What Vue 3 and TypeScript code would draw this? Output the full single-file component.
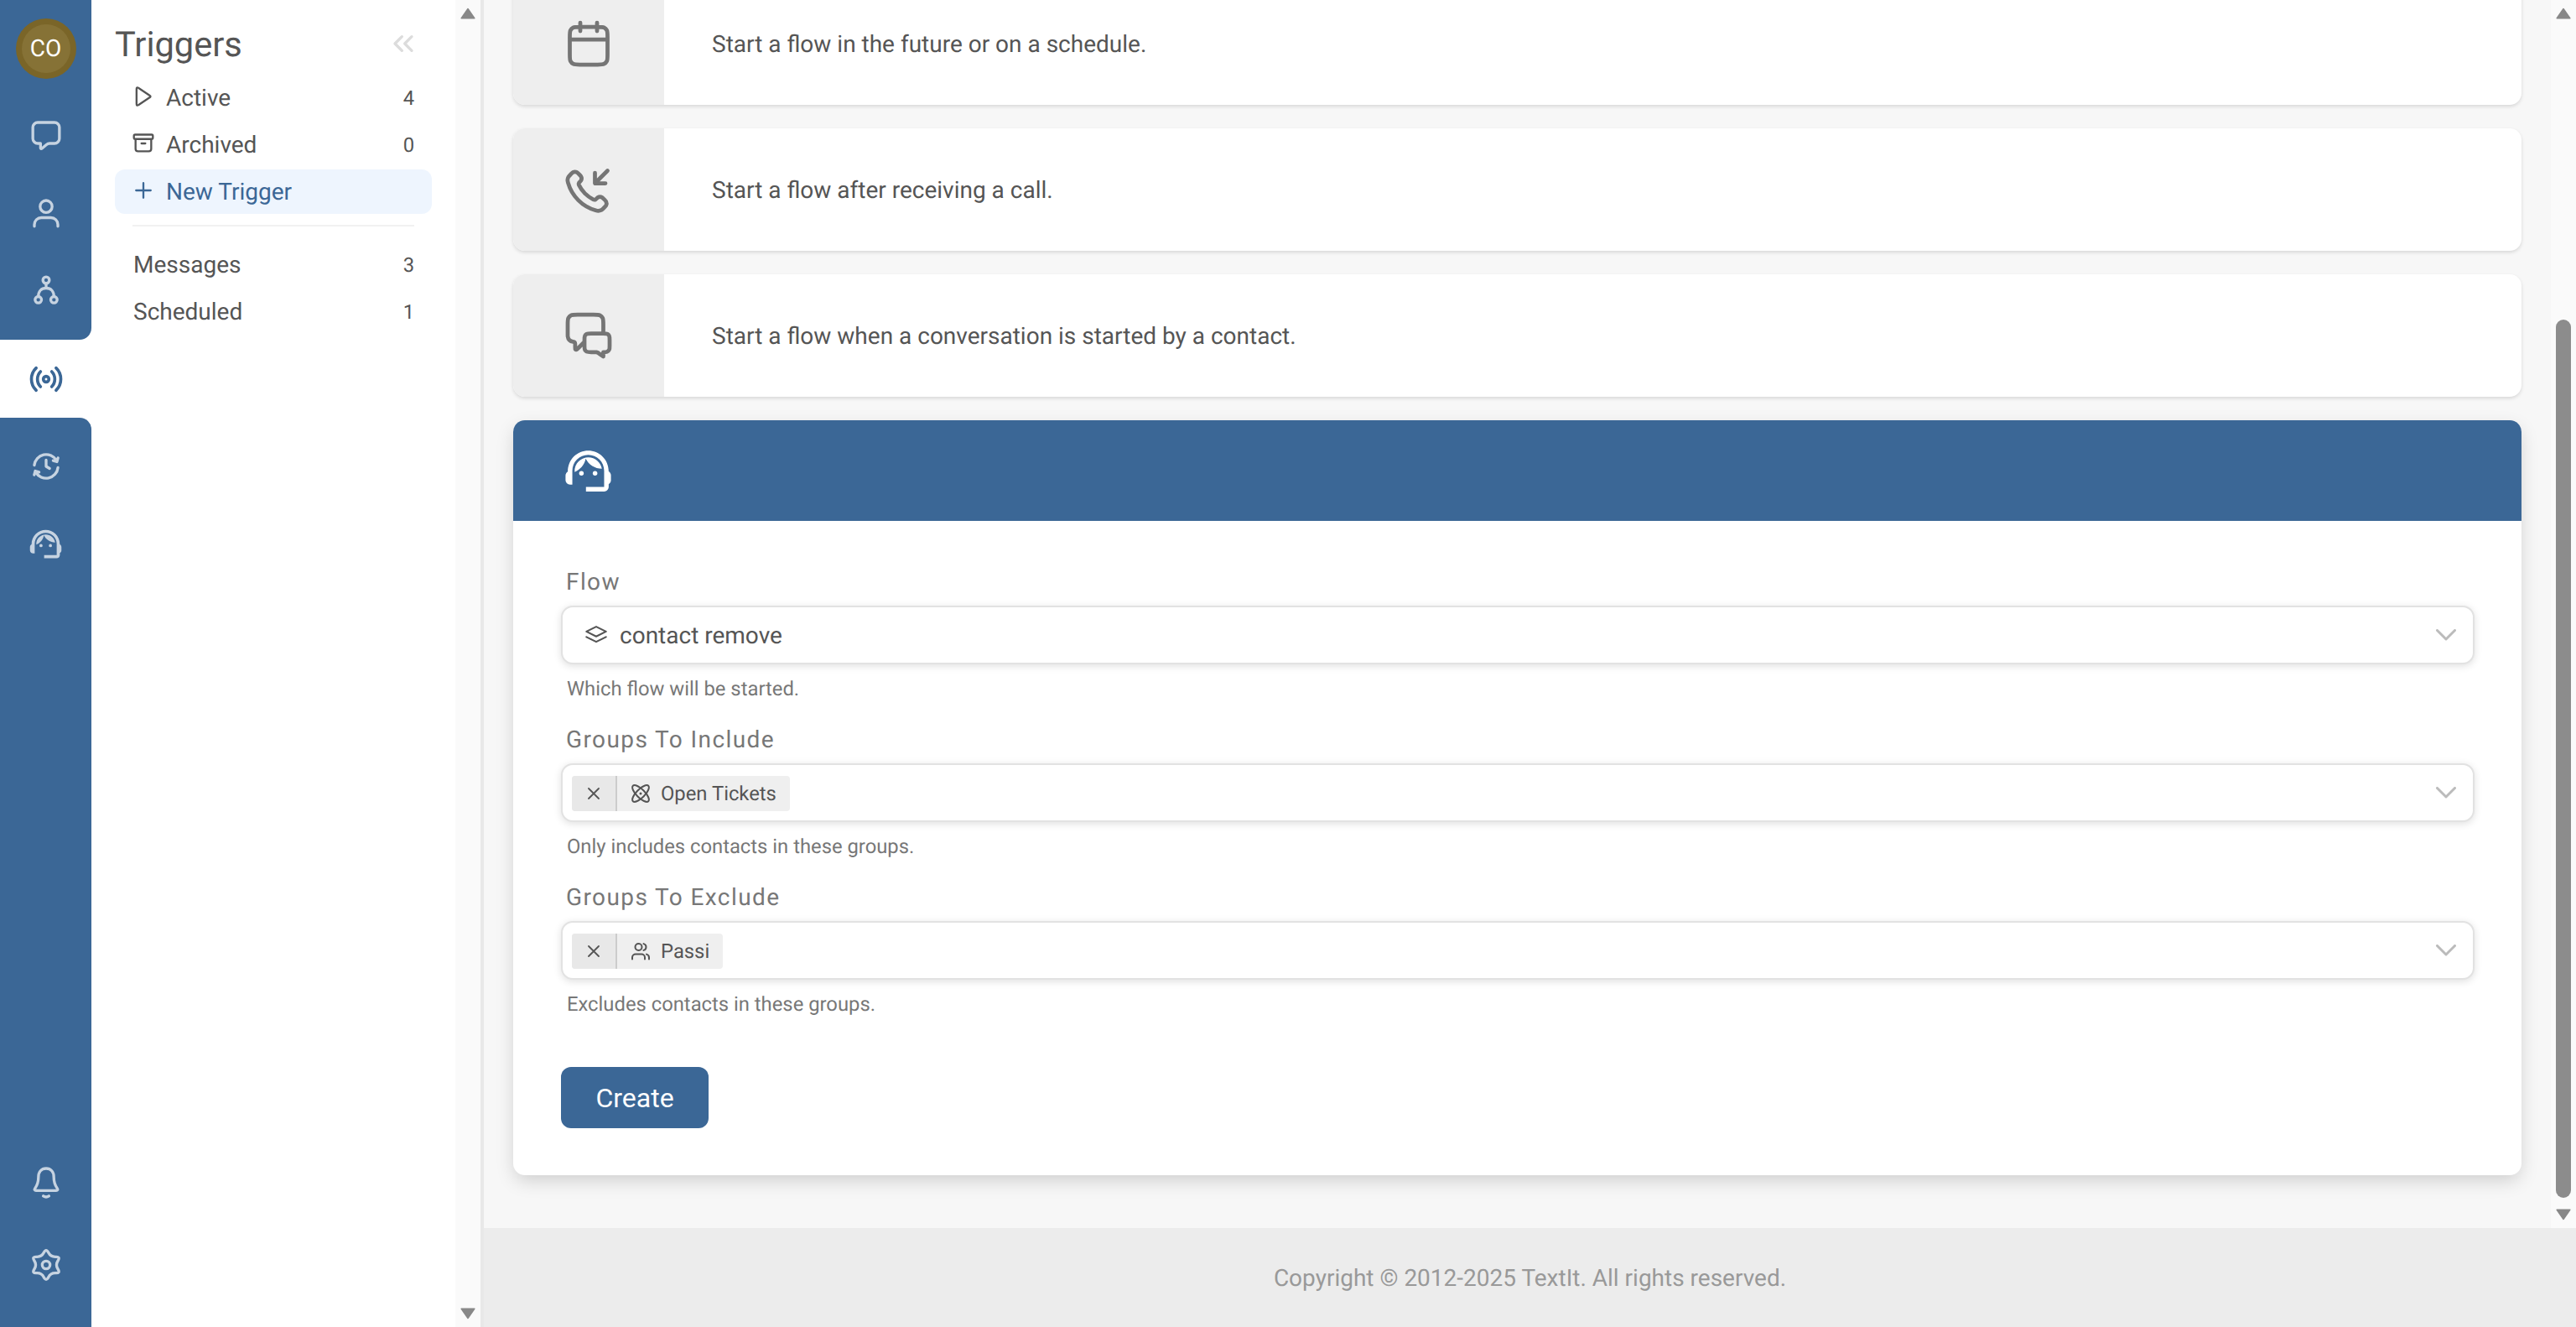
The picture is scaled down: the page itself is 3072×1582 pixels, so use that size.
<script setup lang="ts">
type Row = { label: string; count: number };
type Field = { label: string; help: string; chip: string; kind: string };

const triggerRows: { label: string; count: number; icon: string }[] = [
  { label: "Active", count: 4, icon: "play" },
  { label: "Archived", count: 0, icon: "archive" },
];
const otherRows: Row[] = [
  { label: "Messages", count: 3 },
  { label: "Scheduled", count: 1 },
];
const groupFields: Field[] = [
  { label: "Groups To Include", help: "Only includes contacts in these groups.", chip: "Open Tickets", kind: "atom" },
  { label: "Groups To Exclude", help: "Excludes contacts in these groups.", chip: "Passi", kind: "users" },
];

function gearPath(): string {
  const pts: [number, number][] = [];
  for (let i = 0; i < 12; i++) {
    const a = ((-90 + i * 30) * Math.PI) / 180;
    const r = i % 2 === 0 ? 12 : 6.5;
    pts.push([12 + r * Math.cos(a), 12 + r * Math.sin(a)]);
  }
  const mid = (p: [number, number], q: [number, number]) =>
    `${((p[0] + q[0]) / 2).toFixed(2)} ${((p[1] + q[1]) / 2).toFixed(2)}`;
  let d = `M${mid(pts[11], pts[0])}`;
  for (let i = 0; i < 12; i++) {
    d += `Q${pts[i][0].toFixed(2)} ${pts[i][1].toFixed(2)} ${mid(pts[i], pts[(i + 1) % 12])}`;
  }
  return d + "Z";
}
const gear = gearPath();
const agentPaths = [
  "M21 12.22C21 6.73 16.74 3 12 3c-4.69 0-9 3.65-9 9.28-.6.34-1 .98-1 1.72v2c0 1.1.9 2 2 2h1v-6.1c0-3.87 3.13-7 7-7s7 3.13 7 7V19h-8v2h8c1.1 0 2-.9 2-2v-1.22c.59-.31 1-.92 1-1.61v-2.3c0-.67-.41-1.28-1-1.65z",
  "M18 11.03C17.52 8.18 15.04 6 12.05 6c-3.03 0-6.29 2.51-6.03 6.45 2.47-1.01 4.33-3.21 4.86-5.89 1.31 2.63 4 4.44 7.12 4.47z",
];
</script>

<template>
  <div class="page">
    <nav class="rail">
      <div class="rail-top">
        <div class="avatar"><span class="avatar-in">CO</span></div>
        <button class="rail-btn">
          <svg class="ico40" viewBox="0 0 24 24"><path d="M2.5 6.5A3.5 3.5 0 0 1 6 3h12a3.5 3.5 0 0 1 3.5 3.5v8a3.5 3.5 0 0 1-3.5 3.5h-3.5c-1 0-1.6.3-2.3.9L9 21.6c-.5.4-1 .1-1-.5V18H6a3.5 3.5 0 0 1-3.5-3.5z" /></svg>
        </button>
        <button class="rail-btn">
          <svg class="ico40" viewBox="0 0 24 24"><circle cx="12" cy="7.3" r="4.3" /><path d="M3.6 21.5v-1.2a5 5 0 0 1 5-5h6.8a5 5 0 0 1 5 5v1.2" /></svg>
        </button>
        <button class="rail-btn">
          <svg class="ico40" viewBox="0 0 24 24"><circle cx="12" cy="4.8" r="2.3" /><circle cx="6.4" cy="18.8" r="2.3" /><circle cx="17.6" cy="18.8" r="2.3" /><path d="M12 7.1v3.4M6.4 16.5c0-3.6 2-6 5.6-6s5.6 2.4 5.6 6" /></svg>
        </button>
      </div>
      <button class="rail-active">
        <svg class="ico40 active-ico" viewBox="0 0 24 24"><circle cx="12" cy="12" r="2" /><path d="M4.9 4a11.1 11.1 0 0 0 0 16M19.1 4a11.1 11.1 0 0 1 0 16M8 6.6a7.7 7.7 0 0 0 0 10.8M16 6.6a7.7 7.7 0 0 1 0 10.8" /></svg>
      </button>
      <div class="rail-bottom">
        <button class="rail-btn">
          <svg class="ico40" viewBox="0 0 24 24"><path d="M20.453 12.893A8.5 8.5 0 0 1 4.638 16.25l-.25-.433m-.842-4.71A8.5 8.5 0 0 1 19.361 7.75l.25.433M3.493 18.066l.732-2.732 2.732.732m10.085-8.132 2.732.732.732-2.732M12 7.5V12l2.5 1.5" /></svg>
        </button>
        <button class="rail-btn">
          <svg class="ico45" viewBox="0 0 24 24"><path v-for="d in agentPaths" :key="d" :d="d" /><circle cx="9" cy="13" r="1" /><circle cx="15" cy="13" r="1" /></svg>
        </button>
        <div class="rail-spacer"></div>
        <button class="rail-btn rail-bell">
          <svg class="ico40" viewBox="0 0 24 24"><path d="M12 1.800C8.600 1.800 6.500 4.300 6.500 8c0 3.800-.9 5.900-2.400 8-.7 1-.3 1.600.7 1.600h14.400c1 0 1.400-.6.7-1.600-1.500-2.100-2.400-4.200-2.400-8 0-3.700-2.100-6.200-5.500-6.200zM10 21.500c1.200.8 2.800.8 4 0" /></svg>
        </button>
        <button class="rail-btn">
          <svg class="ico40" viewBox="0 0 24 24"><path :d="gear" /><circle cx="12" cy="12" r="2.800" /></svg>
        </button>
      </div>
    </nav>

    <aside class="sidebar">
      <div class="side-main">
        <div class="side-head">
          <h1 class="side-title">Triggers</h1>
          <svg class="collapse" viewBox="0 0 24 24"><path d="M18 17l-5-5 5-5M11 17l-5-5 5-5" /></svg>
        </div>
        <ul class="menu">
          <li v-for="r in triggerRows" :key="r.label" class="menu-row">
            <svg class="menu-ico" viewBox="0 0 24 24">
              <path v-if="r.icon === 'play'" d="M5 4.989c0-.971 0-1.457.203-1.725a1 1 0 0 1 .737-.396c.335-.02.74.25 1.548.788l10.515 7.01c.668.446 1.002.668 1.118.949a1 1 0 0 1 0 .77c-.116.28-.45.503-1.118.948l-10.515 7.01c-.809.54-1.213.81-1.548.789a1 1 0 0 1-.737-.396C5 20.468 5 19.982 5 19.01V4.99Z" />
              <path v-else d="M4 7.500v10c0 1.700.8 2.500 2.500 2.500h11c1.700 0 2.500-.8 2.500-2.500v-10M3.500 3h17c.8 0 1.200.4 1.200 1.200v2.100c0 .8-.4 1.200-1.200 1.200h-17c-.8 0-1.200-.4-1.200-1.200V4.200C2.300 3.400 2.700 3 3.500 3zM10 12h4" />
            </svg>
            <span class="menu-label">{{ r.label }}</span>
            <span class="menu-count">{{ r.count }}</span>
          </li>
          <li class="menu-row menu-new">
            <svg class="menu-ico" viewBox="0 0 24 24"><path d="M12 4.500v15M4.500 12h15" /></svg>
            <span class="menu-label">New Trigger</span>
          </li>
        </ul>
        <div class="side-rule"></div>
        <ul class="menu menu-plain">
          <li v-for="r in otherRows" :key="r.label" class="menu-row">
            <span class="menu-label">{{ r.label }}</span>
            <span class="menu-count">{{ r.count }}</span>
          </li>
        </ul>
      </div>
      <div class="side-scroll">
        <svg class="arrow" viewBox="0 0 18 14"><path d="M9 1.500 16.800 12.800H1.200z" /></svg>
        <svg class="arrow" viewBox="0 0 18 14"><path d="M9 12.500 16.800 1.200H1.200z" /></svg>
      </div>
    </aside>

    <div class="main">
      <div class="main-top">
        <div class="content">
          <div class="stack">
            <div class="option">
              <div class="option-ico">
                <svg class="ico60" viewBox="0 0 24 24"><path d="M21 10H3m13-8v4M8 2v4m-.2 16h8.400c1.680 0 2.520 0 3.162-.327a3 3 0 0 0 1.311-1.311C21 19.720 21 18.880 21 17.200V8.800c0-1.680 0-2.520-.327-3.162a3 3 0 0 0-1.311-1.311C18.720 4 17.880 4 16.200 4H7.800c-1.680 0-2.520 0-3.162.327a3 3 0 0 0-1.311 1.311C3 6.280 3 7.120 3 8.800v8.400c0 1.680 0 2.520.327 3.162a3 3 0 0 0 1.311 1.311C5.280 22 6.120 22 7.800 22Z" /></svg>
              </div>
              <div class="option-text">Start a flow in the future or on a schedule.</div>
            </div>
            <div class="option">
              <div class="option-ico">
                <svg class="ico60" viewBox="0 0 24 24"><path d="M15 9V4m0 5h5m-5 0 6-6M10.227 13.863a14.604 14.604 0 0 1-2.847-4.010 1.698 1.698 0 0 1-.113-.266 1.050 1.050 0 0 1 .147-.862c.048-.067.105-.124.220-.238.350-.350.524-.525.638-.7a2 2 0 0 0 0-2.180c-.114-.177-.289-.352-.638-.701l-.195-.195c-.532-.531-.797-.797-1.082-.941a2 2 0 0 0-1.805 0c-.285.144-.551.410-1.082.941l-.158.158c-.530.530-.795.794-.997 1.154-.224.400-.386 1.020-.384 1.479 0 .413.080.695.240 1.260a19.038 19.038 0 0 0 4.873 8.283 19.039 19.039 0 0 0 8.284 4.873c.565.160.847.240 1.260.240a3.500 3.500 0 0 0 1.478-.384c.360-.201.625-.467 1.154-.997l.158-.158c.532-.530.797-.797.941-1.082a2 2 0 0 0 0-1.805c-.144-.285-.410-.550-.940-1.082l-.196-.195c-.350-.350-.524-.524-.7-.638a2 2 0 0 0-2.180 0c-.176.114-.350.289-.7.638-.115.115-.172.172-.239.220a1.050 1.050 0 0 1-.862.147 1.694 1.694 0 0 1-.266-.113 14.600 14.600 0 0 1-4.010-2.847Z" /></svg>
              </div>
              <div class="option-text">Start a flow after receiving a call.</div>
            </div>
            <div class="option">
              <div class="option-ico">
                <svg class="ico60" viewBox="0 0 24 24"><path d="M10 15 6.925 18.114c-.429.434-.644.652-.828.667a.5.5 0 0 1-.421-.173c-.12-.14-.12-.446-.12-1.056v-1.560c0-.547-.449-.944-.991-1.023a3 3 0 0 1-2.533-2.533C2 12.219 2 11.960 2 11.443V6.800c0-1.680 0-2.520.327-3.162a3 3 0 0 1 1.311-1.311C4.280 2 5.120 2 6.800 2h7.400c1.680 0 2.520 0 3.162.327a3 3 0 0 1 1.311 1.311C19 4.280 19 5.120 19 6.800V11m0 11-2.176-1.513a3 3 0 0 0-.626-.394 2 2 0 0 0-.462-.145c-.18-.033-.366-.033-.739-.033H13.200c-1.120 0-1.680 0-2.108-.218a2 2 0 0 1-.874-.874C10 18.395 10 17.835 10 16.715V14.200c0-1.120 0-1.680.218-2.108a2 2 0 0 1 .874-.874C11.520 11 12.080 11 13.200 11h5.600c1.120 0 1.680 0 2.108.218a2 2 0 0 1 .874.874C22 12.520 22 13.080 22 14.200v2.715c0 .931 0 1.397-.152 1.765a2 2 0 0 1-1.083 1.082c-.367.153-.833.153-1.765.153V22Z" /></svg>
              </div>
              <div class="option-text">Start a flow when a conversation is started by a contact.</div>
            </div>

            <section class="form-card">
              <header class="form-head">
                <svg class="ico65" viewBox="0 0 24 24"><path v-for="d in agentPaths" :key="d" :d="d" /><circle cx="9" cy="13" r="1" /><circle cx="15" cy="13" r="1" /></svg>
              </header>
              <div class="form-body">
                <div class="field">
                  <label class="field-label">Flow</label>
                  <div class="select">
                    <svg class="layers" viewBox="0 0 24 24"><path d="M2 8.500 12 3.500l10 5-10 5zM2 14l10 5 10-5" /></svg>
                    <span class="select-value">contact remove</span>
                    <svg class="chev" viewBox="0 0 24 14"><path d="M1.500 1.500 12 12 22.500 1.500" /></svg>
                  </div>
                  <div class="field-help">Which flow will be started.</div>
                </div>
                <div v-for="f in groupFields" :key="f.label" class="field">
                  <label class="field-label">{{ f.label }}</label>
                  <div class="select select-chips">
                    <span class="chip">
                      <span class="chip-x">
                        <svg class="chip-x-ico" viewBox="0 0 14 14"><path d="M1 1l12 12M13 1 1 13" /></svg>
                      </span>
                      <svg v-if="f.kind === 'atom'" class="chip-ico" viewBox="0 0 24 24">
                        <ellipse cx="12" cy="12" rx="13" ry="5" transform="rotate(45 12 12)" />
                        <ellipse cx="12" cy="12" rx="13" ry="5" transform="rotate(-45 12 12)" />
                        <circle class="dot" cx="12" cy="12" r="1.500" />
                      </svg>
                      <svg v-else class="chip-ico" viewBox="0 0 24 24">
                        <circle cx="9.500" cy="7" r="4" />
                        <path d="M22 21.500v-2a4 4 0 0 0-3-3.870M15.500 3.130a4 4 0 0 1 0 7.750M17 21.500v-2a4 4 0 0 0-4-4H6a4 4 0 0 0-4 4v2" />
                      </svg>
                      <span class="chip-text">{{ f.chip }}</span>
                    </span>
                    <svg class="chev" viewBox="0 0 24 14"><path d="M1.500 1.500 12 12 22.500 1.500" /></svg>
                  </div>
                  <div class="field-help">{{ f.help }}</div>
                </div>
                <button class="create">Create</button>
              </div>
            </section>
          </div>
        </div>
        <div class="main-scroll">
          <svg class="arrow" viewBox="0 0 18 14"><path d="M9 1.500 16.800 12.800H1.200z" /></svg>
          <div class="thumb"></div>
          <svg class="arrow arrow-down" viewBox="0 0 18 14"><path d="M9 12.500 16.800 1.200H1.200z" /></svg>
        </div>
      </div>
      <footer class="footer">Copyright © 2012-2025 TextIt. All rights reserved.</footer>
    </div>
  </div>
</template>

<style>
html, body { margin: 0; padding: 0; overflow: hidden; background: #fff; }
</style>

<style scoped>
.page {
  display: flex;
  width: 3072px;
  height: 1582px;
  overflow: hidden;
  font-family: Roboto, "Liberation Sans", sans-serif;
  text-rendering: geometricPrecision;
  color: #555;
  background: #fff;
}
button { border: 0; padding: 0; background: none; font: inherit; }
svg { display: block; flex: none; }

/* Icon rail */
.rail { width: 109px; flex: none; display: flex; flex-direction: column; }
.rail-top {
  height: 405px;
  background: #3b6796;
  border-bottom-right-radius: 14px;
  display: flex;
  flex-direction: column;
  align-items: center;
  padding-top: 22px;
  box-sizing: border-box;
}
.rail-bottom {
  flex: 1;
  background: #3b6796;
  border-top-right-radius: 14px;
  display: flex;
  flex-direction: column;
  align-items: center;
  padding: 12px 0 28px;
  box-sizing: border-box;
}
.rail-spacer { flex: 1; }
.rail-bell { margin-bottom: 5.5px; }
.avatar {
  width: 72px;
  height: 72px;
  border-radius: 50%;
  background: #7a6528;
  display: flex;
  align-items: center;
  justify-content: center;
  margin-bottom: 21px;
}
.avatar-in {
  width: 58px;
  height: 58px;
  border-radius: 50%;
  background: #867236;
  color: #fff;
  font-size: 28px;
  line-height: 58px;
  text-align: center;
}
.rail-btn { width: 109px; height: 92.5px; display: flex; align-items: center; justify-content: center; }
.rail-active { width: 109px; height: 93px; display: flex; align-items: center; justify-content: center; flex: none; }
.ico40 { width: 40px; height: 40px; fill: none; stroke: #c6d3e1; stroke-width: 2; stroke-linecap: round; stroke-linejoin: round; }
.active-ico { stroke: #3b6796; stroke-width: 2.200; }
.ico45 { width: 45px; height: 45px; fill: #c6d3e1; }
.ico65 { width: 65px; height: 65px; fill: #fff; }

/* Sidebar */
.sidebar { width: 464px; flex: none; display: flex; border-right: 4px solid #e8e8e8; box-sizing: content-box; }
.side-main { flex: 1; min-width: 0; padding: 0 28px; box-sizing: border-box; }
.side-head {
  height: 90px;
  display: flex;
  align-items: flex-start;
  justify-content: space-between;
  padding-right: 14px;
  padding-top: 30px;
  box-sizing: border-box;
}
.side-title { margin: 0; font-size: 41.6px; line-height: 47px; font-weight: 400; color: #555; }
.collapse { width: 40px; height: 40px; margin: 2px 0 0; fill: none; stroke: #dcdcdc; stroke-width: 2; stroke-linecap: round; stroke-linejoin: round; }
.menu { list-style: none; margin: 0; padding: 0; display: flex; flex-direction: column; gap: 3px; }
.menu-row {
  height: 53px;
  display: flex;
  align-items: center;
  padding: 0 21px 0 20px;
  border-radius: 12px;
  font-size: 28px;
}
.menu-plain .menu-row { padding-left: 22px; }
.menu-ico { width: 28px; height: 28px; margin: -3px 13px 0 0; fill: none; stroke: #555; stroke-width: 2; stroke-linecap: round; stroke-linejoin: round; }
.menu-label { flex: 1; }
.menu-count { font-size: 23.8px; color: #555; }
.menu-new { background: #eef5fe; color: #3b6796; }
.menu-new .menu-ico { stroke: #3b6796; }
.side-rule { height: 2px; margin: 13px 21px 19px; background: #f1f1f1; }
.side-scroll {
  width: 30px;
  flex: none;
  background: #fafafa;
  display: flex;
  flex-direction: column;
  align-items: center;
  justify-content: space-between;
  padding: 9px 0;
  box-sizing: border-box;
}
.arrow { width: 18px; height: 14px; fill: #888; stroke: #888; stroke-width: 1.500; stroke-linejoin: round; }

/* Main */
.main { flex: 1; min-width: 0; display: flex; flex-direction: column; background: #f7f7f7; }
.main-top { flex: 1; min-height: 0; display: flex; }
.content { flex: 1; min-width: 0; padding: 0 35px; box-sizing: border-box; overflow: hidden; }
.stack { display: flex; flex-direction: column; gap: 28px; margin-top: -21px; }
.option {
  display: flex;
  height: 146px;
  background: #fff;
  border-radius: 14px;
  overflow: hidden;
  box-shadow: 0 2px 4px rgba(0, 0, 0, 0.13);
}
.option-ico {
  width: 180px;
  flex: none;
  background: #eee;
  display: flex;
  align-items: center;
  justify-content: center;
}
.ico60 { width: 60px; height: 60px; fill: none; stroke: #757575; stroke-width: 1.900; stroke-linecap: round; stroke-linejoin: round; }
.option-text { display: flex; align-items: center; padding-left: 57px; font-size: 28px; color: #555; }

.form-card {
  background: #fff;
  border-radius: 14px;
  overflow: hidden;
  box-shadow: 0 8px 22px -2px rgba(0, 0, 0, 0.17);
}
.form-head {
  height: 120px;
  background: #3b6796;
  display: flex;
  align-items: center;
  padding-left: 57px;
}
.form-body { padding: 53px 56px 56px 57px; display: flex; flex-direction: column; align-items: stretch; }
.field { margin-bottom: 26px; }
.field-label {
  display: block;
  height: 40px;
  line-height: 40px;
  padding-left: 6px;
  font-size: 28px;
  color: #777;
  letter-spacing: 1.400px;
}
.select {
  margin-top: 8px;
  height: 70px;
  box-sizing: border-box;
  border: 2px solid #e2e2e2;
  border-radius: 14px;
  background: #fff;
  box-shadow: 0 2px 10px rgba(0, 0, 0, 0.13);
  display: flex;
  align-items: center;
  padding-left: 26px;
  padding-right: 20px;
}
.select-chips { padding-left: 11px; }
.layers { width: 28px; height: 28px; fill: none; stroke: #555; stroke-width: 1.800; stroke-linecap: round; stroke-linejoin: round; }
.select-value { margin-left: 14px; font-size: 28px; color: #555; }
.chev { width: 24px; height: 14px; margin-left: auto; fill: none; stroke: #bbb; stroke-width: 3; stroke-linecap: round; stroke-linejoin: round; }
.chip {
  display: flex;
  align-items: center;
  height: 42px;
  margin-top: 2px;
  border-radius: 4px;
  background: #efefef;
  overflow: hidden;
  padding-right: 16px;
}
.chip-x {
  width: 52px;
  height: 42px;
  background: #e8e8e8;
  border-right: 2px solid #ccc;
  box-sizing: content-box;
  display: flex;
  align-items: center;
  justify-content: center;
}
.chip-x-ico { width: 14px; height: 14px; fill: none; stroke: #555; stroke-width: 1.800; stroke-linecap: round; }
.chip-ico { width: 24px; height: 24px; margin-left: 16px; fill: none; stroke: #555; stroke-width: 2; stroke-linecap: round; stroke-linejoin: round; }
.chip-ico .dot { fill: #555; stroke: none; }
.chip-text { margin-left: 12px; font-size: 23.8px; color: #555; }
.field-help { margin-top: 14px; height: 30px; line-height: 30px; padding-left: 7px; font-size: 23.8px; color: #777; }
.create {
  width: 176px;
  height: 73px;
  margin-top: 34px;
  border-radius: 12px;
  background: #3b6796;
  color: #fff;
  font-size: 32px;
  font-weight: 400;
}
.main-scroll {
  width: 30px;
  flex: none;
  background: #fafafa;
  display: flex;
  flex-direction: column;
  align-items: center;
  padding-top: 9px;
  box-sizing: border-box;
}
.thumb { width: 18px; height: 1047px; margin-top: 358px; border-radius: 9px; background: #8c8c8c; }
.arrow-down { margin-top: 13px; }
.footer {
  height: 118px;
  flex: none;
  background: #ececec;
  display: flex;
  align-items: center;
  justify-content: center;
  font-size: 28px;
  color: #999;
}
</style>
